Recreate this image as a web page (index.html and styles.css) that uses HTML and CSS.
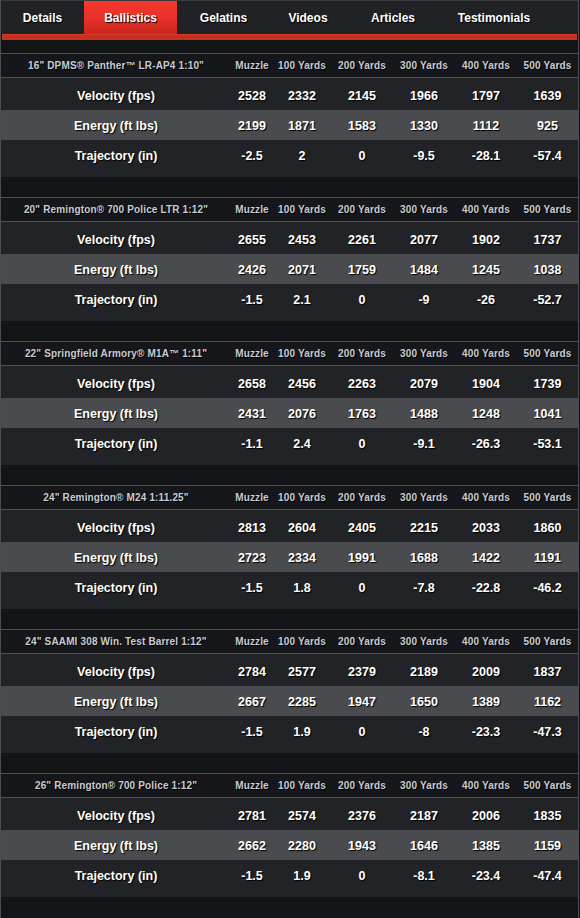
FILE: index.html
```html
<!DOCTYPE html>
<html>
<head>
<meta charset="utf-8">
<link rel="stylesheet" href="styles.css">
</head>
<body>
<div class="panel">
  <nav class="tabs">
    <a class="tab t1">Details</a>
    <a class="tab t2 active">Ballistics</a>
    <a class="tab t3">Gelatins</a>
    <a class="tab t4">Videos</a>
    <a class="tab t5">Articles</a>
    <a class="tab t6">Testimonials</a>
  </nav>
  <div class="redbar"></div>
  <div class="spacer"></div>

  <section class="block">
    <div class="row head"><span>16" DPMS® Panther™ LR-AP4 1:10"</span><span>Muzzle</span><span>100 Yards</span><span>200 Yards</span><span>300 Yards</span><span>400 Yards</span><span>500 Yards</span></div>
    <div class="row vel"><span>Velocity (fps)</span><span>2528</span><span>2332</span><span>2145</span><span>1966</span><span>1797</span><span>1639</span></div>
    <div class="row eng"><span>Energy (ft lbs)</span><span>2199</span><span>1871</span><span>1583</span><span>1330</span><span>1112</span><span>925</span></div>
    <div class="row traj"><span>Trajectory (in)</span><span>-2.5</span><span>2</span><span>0</span><span>-9.5</span><span>-28.1</span><span>-57.4</span></div>
  </section>

  <section class="block">
    <div class="row head"><span>20" Remington® 700 Police LTR 1:12"</span><span>Muzzle</span><span>100 Yards</span><span>200 Yards</span><span>300 Yards</span><span>400 Yards</span><span>500 Yards</span></div>
    <div class="row vel"><span>Velocity (fps)</span><span>2655</span><span>2453</span><span>2261</span><span>2077</span><span>1902</span><span>1737</span></div>
    <div class="row eng"><span>Energy (ft lbs)</span><span>2426</span><span>2071</span><span>1759</span><span>1484</span><span>1245</span><span>1038</span></div>
    <div class="row traj"><span>Trajectory (in)</span><span>-1.5</span><span>2.1</span><span>0</span><span>-9</span><span>-26</span><span>-52.7</span></div>
  </section>

  <section class="block">
    <div class="row head"><span>22" Springfield Armory® M1A™ 1:11"</span><span>Muzzle</span><span>100 Yards</span><span>200 Yards</span><span>300 Yards</span><span>400 Yards</span><span>500 Yards</span></div>
    <div class="row vel"><span>Velocity (fps)</span><span>2658</span><span>2456</span><span>2263</span><span>2079</span><span>1904</span><span>1739</span></div>
    <div class="row eng"><span>Energy (ft lbs)</span><span>2431</span><span>2076</span><span>1763</span><span>1488</span><span>1248</span><span>1041</span></div>
    <div class="row traj"><span>Trajectory (in)</span><span>-1.1</span><span>2.4</span><span>0</span><span>-9.1</span><span>-26.3</span><span>-53.1</span></div>
  </section>

  <section class="block">
    <div class="row head"><span>24" Remington® M24 1:11.25"</span><span>Muzzle</span><span>100 Yards</span><span>200 Yards</span><span>300 Yards</span><span>400 Yards</span><span>500 Yards</span></div>
    <div class="row vel"><span>Velocity (fps)</span><span>2813</span><span>2604</span><span>2405</span><span>2215</span><span>2033</span><span>1860</span></div>
    <div class="row eng"><span>Energy (ft lbs)</span><span>2723</span><span>2334</span><span>1991</span><span>1688</span><span>1422</span><span>1191</span></div>
    <div class="row traj"><span>Trajectory (in)</span><span>-1.5</span><span>1.8</span><span>0</span><span>-7.8</span><span>-22.8</span><span>-46.2</span></div>
  </section>

  <section class="block">
    <div class="row head"><span>24" SAAMI 308 Win. Test Barrel 1:12"</span><span>Muzzle</span><span>100 Yards</span><span>200 Yards</span><span>300 Yards</span><span>400 Yards</span><span>500 Yards</span></div>
    <div class="row vel"><span>Velocity (fps)</span><span>2784</span><span>2577</span><span>2379</span><span>2189</span><span>2009</span><span>1837</span></div>
    <div class="row eng"><span>Energy (ft lbs)</span><span>2667</span><span>2285</span><span>1947</span><span>1650</span><span>1389</span><span>1162</span></div>
    <div class="row traj"><span>Trajectory (in)</span><span>-1.5</span><span>1.9</span><span>0</span><span>-8</span><span>-23.3</span><span>-47.3</span></div>
  </section>

  <section class="block">
    <div class="row head"><span>26" Remington® 700 Police 1:12"</span><span>Muzzle</span><span>100 Yards</span><span>200 Yards</span><span>300 Yards</span><span>400 Yards</span><span>500 Yards</span></div>
    <div class="row vel"><span>Velocity (fps)</span><span>2781</span><span>2574</span><span>2376</span><span>2187</span><span>2006</span><span>1835</span></div>
    <div class="row eng"><span>Energy (ft lbs)</span><span>2662</span><span>2280</span><span>1943</span><span>1646</span><span>1385</span><span>1159</span></div>
    <div class="row traj"><span>Trajectory (in)</span><span>-1.5</span><span>1.9</span><span>0</span><span>-8.1</span><span>-23.4</span><span>-47.4</span></div>
  </section>
</div>
</body>
</html>
```

FILE: styles.css
```css
html, body {
  margin: 0;
  padding: 0;
  background: #131416;
  font-family: "Liberation Sans", Arial, Helvetica, sans-serif;
}

.panel {
  width: 577px;
  min-height: 918px;
  border-left: 1px solid #4c4d50;
  border-right: 1px solid #4c4d50;
  background: #131416;
}

.tabs {
  display: flex;
  height: 33px;
  border-top: 1px solid #3a3b3e;
  background: #212225;
}

.tab {
  display: block;
  box-sizing: border-box;
  height: 33px;
  padding-top: 1px;
  line-height: 33px;
  text-align: center;
  color: #fff;
  font-size: 12px;
  font-weight: bold;
  text-shadow: 1px 1px 1px #000;
}

.t1 { width: 83px; }
.t2 { width: 93px; }
.t3 { width: 93px; }
.t4 { width: 76px; }
.t5 { width: 94px; }
.t6 { width: 108px; }

.tab.active {
  background: linear-gradient(to bottom, #f6392d 0%, #e8312a 50%, #c9271f 100%);
}

.redbar {
  height: 5px;
  margin: 0 1px;
  background: #c7301e;
  border-top: 1px solid #d63c26;
}

.spacer {
  height: 13px;
}

.block {
  border-top: 1px solid #4f5054;
  padding-bottom: 20px;
}

.row {
  display: grid;
  grid-template-columns: 230px 42px 58px 62px 62px 62px 61px;
  align-items: center;
  text-align: center;
  white-space: nowrap;
}

.row span {
  display: block;
}

.head {
  height: 23px;
  background: #16171a;
  border-bottom: 1px solid #4f5054;
  color: #c8ccd2;
  font-size: 10px;
  font-weight: bold;
  letter-spacing: 0.15px;
  text-shadow: 1px 1px 0 #000;
}

.vel, .eng, .traj {
  color: #fff;
  font-size: 12.5px;
  font-weight: bold;
  text-shadow: 1px 1px 1px #000;
}

.vel {
  height: 29px;
  padding-top: 3px;
  background: #222326;
}

.eng {
  height: 29px;
  padding-top: 1px;
  background: #4a4b4f;
}

.traj {
  height: 29px;
  padding-top: 1px;
  padding-bottom: 7px;
  background: #222326;
}
```
